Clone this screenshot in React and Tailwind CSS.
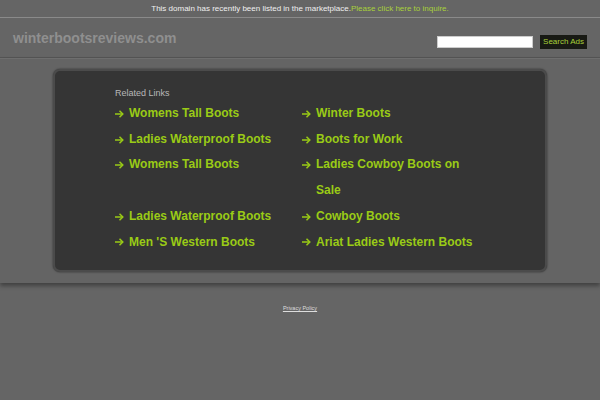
import React from "react";

const left = ["Womens Tall Boots", "Ladies Waterproof Boots", "Womens Tall Boots", "Ladies Waterproof Boots", "Men 'S Western Boots"];
const right = ["Winter Boots", "Boots for Work", "Ladies Cowboy Boots on Sale", "Cowboy Boots", "Ariat Ladies Western Boots"];

function Item({ text }) {
  return (
    <div className="flex leading-[25.7px]">
      <span className="w-[14px] shrink-0 h-[25.7px] flex items-center">
        <svg width="9" height="8" viewBox="0 0 9 8" fill="none" stroke="currentColor" strokeWidth="1.5">
          <path d="M0 4H7.8" />
          <path d="M4.5 0.8L7.8 4L4.5 7.2" />
        </svg>
      </span>
      <span>{text}</span>
    </div>
  );
}

export default function App() {
  return (
    <div className="w-[600px] h-[400px] bg-[#656565] overflow-hidden" style={{ fontFamily: '"Liberation Sans", Arial, sans-serif' }}>
      <div className="h-[18px] flex items-center justify-center text-[8px] text-[#f0f0f0] border-b border-[#8a8a8a]">
        <span>This domain has recently been listed in the marketplace.</span>
        <span className="text-[#a8d13a]">Please click here to inquire.</span>
      </div>
      <div className="h-[40px] flex items-center justify-between pl-[13px] pr-[13px] border-b border-[#555555]">
        <div className="text-[14px] font-bold text-[#8f8f8f] mt-[2px]">winterbootsreviews.com</div>
        <div className="flex items-center gap-[7px] mt-[9px]">
          <div className="w-[96px] h-[12px] bg-white border border-[#cccccc]"></div>
          <div className="h-[14px] px-[3px] bg-[#181a14] text-[#a8d13a] text-[8px] flex items-center">Search Ads</div>
        </div>
      </div>
      <div className="h-[225px] pt-[10px] border-t border-[#6e6e6e] shadow-[0_3px_4px_rgba(0,0,0,0.35)] bg-[#646464]">
        <div className="ml-[53px] w-[494px] h-[203px] rounded-[7px] bg-[#353535] border-2 border-[#4b4b4b] shadow-[0_0_2px_rgba(0,0,0,0.6)] pl-[60px] pt-[17px]">
          <div className="text-[9px] text-[#b8b8b8] leading-[10px] mb-[3px]">Related Links</div>
          <div className="grid grid-cols-[187px_178px] text-[12px] font-bold text-[#9acb16]">
            {left.map((l, i) => (
              <React.Fragment key={i}>
                <Item text={l} />
                <Item text={right[i]} />
              </React.Fragment>
            ))}
          </div>
        </div>
      </div>
      <div className="flex justify-center pt-[21px]">
        <span className="text-[5.5px] text-[#dddddd] underline">Privacy Policy</span>
      </div>
    </div>
  );
}
